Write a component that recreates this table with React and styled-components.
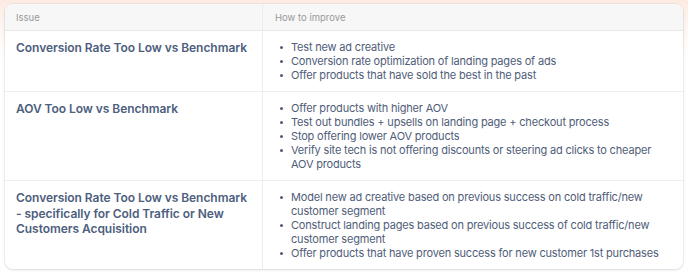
import styled, { createGlobalStyle } from "styled-components";

const rows = [
    {
        issue: "Conversion Rate Too Low vs Benchmark",
        tips: [
            "Test new ad creative",
            "Conversion rate optimization of landing pages of ads",
            "Offer products that have sold the best in the past",
        ],
    },
    {
        issue: "AOV Too Low vs Benchmark",
        tips: [
            "Offer products with higher AOV",
            "Test out bundles + upsells on landing page + checkout process",
            "Stop offering lower AOV products",
            "Verify site tech is not offering discounts or steering ad clicks to cheaper AOV products",
        ],
    },
    {
        issue: "Conversion Rate Too Low vs Benchmark - specifically for Cold Traffic or New Customers Acquisition",
        tips: [
            "Model new ad creative based on previous success on cold traffic/new customer segment",
            "Construct landing pages based on previous success of cold traffic/new customer segment",
            "Offer products that have proven success for new customer 1st purchases",
        ],
    },
];

export default function App() {
    return (
        <Page>
            <GlobalStyle/>
            <Card>
                <HeadCell>Issue</HeadCell>
                <HeadCell $right>How to improve</HeadCell>
                {rows.map((row, i) => (
                    <Row key={i} $last={i === rows.length - 1}>
                        <IssueCell>{row.issue}</IssueCell>
                        <TipCell>
                            <TipList>
                                {row.tips.map((tip, j) => <Tip key={j}>{tip}</Tip>)}
                            </TipList>
                        </TipCell>
                    </Row>
                ))}
            </Card>
        </Page>
    )
}

const GlobalStyle = createGlobalStyle`
    html, body {
        margin: 0;
        padding: 0;
        background: #fff;
    }
    body {
        font-family: Inter, "Noto Sans", sans-serif;
    }
`

const Page = styled.div`
    width: 688px;
    height: 278px;
    box-sizing: border-box;
    padding: 4px 5px 0;
    background: linear-gradient(180deg, #fcebe2 0px, #fdf4ef 20px, #ffffff 60px);
`

const Card = styled.div`
    display: grid;
    grid-template-columns: 257px 1fr;
    background: #fff;
    border-radius: 8px;
    overflow: hidden;
    box-shadow: 0 1px 3px rgba(0, 0, 0, 0.12), 0 0 0 1px rgba(0, 0, 0, 0.03);
`

const HeadCell = styled.div`
    height: 26px;
    display: flex;
    align-items: center;
    padding-left: ${p => p.$right ? "12px" : "11px"};
    background: #f7f7f7;
    border-bottom: 1px solid #e9e9e9;
    border-left: ${p => p.$right ? "1px solid #ececec" : "none"};
    font-size: 9.5px;
    color: #999;
`

const Row = styled.div`
    display: contents;
    & > div {
        border-bottom: ${p => p.$last ? "none" : "1px solid #eeeeee"};
    }
`

const IssueCell = styled.div`
    padding: 9px 9px 9px 11px;
    font-size: 12px;
    letter-spacing: -0.05px;
    font-weight: 600;
    line-height: 15.5px;
    color: #4d5e7e;
`

const TipCell = styled.div`
    padding: 9px 13px 9px 12px;
    border-left: 1px solid #ececec;
`

const TipList = styled.ul`
    list-style: none;
    margin: 0;
    padding: 0;
`

const Tip = styled.li`
    position: relative;
    padding-left: 16px;
    font-size: 11px;
    letter-spacing: -0.18px;
    line-height: 14px;
    color: #4f5d78;
    &::before {
        content: "";
        position: absolute;
        left: 5px;
        top: 6px;
        width: 3px;
        height: 3px;
        border-radius: 50%;
        background: #4f5d78;
    }
`
